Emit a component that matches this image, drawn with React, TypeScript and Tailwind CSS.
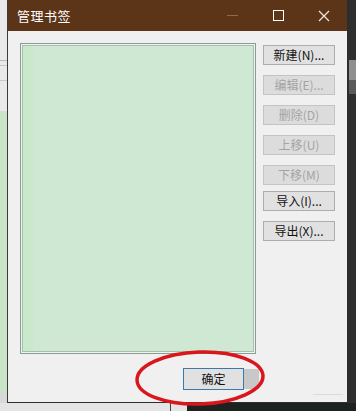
import React from 'react';

const buttons = [
  { label: '新建(N)...', enabled: true },
  { label: '编辑(E)...', enabled: false },
  { label: '删除(D)', enabled: false },
  { label: '上移(U)', enabled: false },
  { label: '下移(M)', enabled: false },
  { label: '导入(I)...', enabled: true },
  { label: '导出(X)...', enabled: true },
];

const SideButton = ({ label, enabled }: { label: string; enabled: boolean }) => (
  <div
    className={
      'w-[72px] h-[20px] flex items-center justify-center text-[12px] leading-none border ' +
      (enabled
        ? 'bg-[#e1e1e1] border-[#adadad] text-[#111]'
        : 'bg-[#dcdcdc] border-[#c4c4c4] text-[#a3a3a3]')
    }
  >
    {label}
  </div>
);

export default function App() {
  const font = { fontFamily: '"Noto Sans CJK SC", "Liberation Sans", sans-serif' };
  return (
    <div className="relative w-[356px] h-[411px] overflow-hidden flex flex-col bg-[#1f1f1f]" style={font}>
      <div className="flex h-[403px]">
        {/* app behind, left */}
        <div className="w-[7px] flex flex-col bg-[#e9e9e9]">
          <div className="h-[60px]" />
          <div className="h-px bg-[#b9b9b9]" />
          <div className="h-[4px]" />
          <div className="h-px bg-[#c9c9c9]" />
          <div className="h-[14px]" />
          <div className="h-px bg-[#c9c9c9]" />
          <div className="h-[30px]" />
          <div className="flex-1 bg-[#c9e4c7] flex flex-col justify-end">
            <div className="h-[10px] bg-[#d8d8d8]" />
          </div>
        </div>

        {/* dialog */}
        <div className="w-[342px] flex flex-col border-r-2 border-b border-[#2d2d2d] border-l border-l-[#3a3a3a]">
          <div className="h-[31px] bg-[#5c3417] flex items-center text-white">
            <span className="ml-[9px] text-[13px] tracking-[0.5px]">管理书签</span>
            <div className="flex-1" />
            <div className="w-[46px] h-full flex items-center justify-center">
              <div className="w-[11px] h-px bg-[#8a6a55]" />
            </div>
            <div className="w-[46px] h-full flex items-center justify-center">
              <div className="w-[11px] h-[11px] border border-white" />
            </div>
            <div className="w-[46px] h-full flex items-center justify-center">
              <svg width="12" height="12" viewBox="0 0 12 12">
                <path d="M1 1L11 11M11 1L1 11" stroke="#f3e9e1" strokeWidth="1.2" />
              </svg>
            </div>
          </div>

          <div className="flex-1 bg-[#f0f0f0] flex flex-col">
            <div className="flex pt-[12px] pl-[12px]">
              <div className="w-[236px] h-[311px] border border-[#8b9b96] p-px bg-[#eef5ef]">
                <div className="w-full h-full border border-[#a9bdb0] bg-[#cfe8d3] flex">
                  <div className="w-[10px] bg-[#c9eaca]" />
                </div>
              </div>
              <div className="ml-[7px] pt-[2px] flex flex-col">
                <div className="flex flex-col gap-[10px]">
                  {buttons.slice(0, 5).map((b) => (
                    <SideButton key={b.label} {...b} />
                  ))}
                </div>
                <div className="mt-[6px] flex flex-col gap-[10px]">
                  {buttons.slice(5).map((b) => (
                    <SideButton key={b.label} {...b} />
                  ))}
                </div>
              </div>
            </div>

            <div className="flex mt-[14px] pl-[175px] items-center">
              <div className="w-[61px] h-[22px] border border-[#3c78a8] bg-[#e1e1e1] flex items-center justify-center text-[12px] text-[#111]">
                确定
              </div>
              <div className="w-[15px] h-[20px] bg-[#c8c8c8]" />
            </div>
            <div className="flex-1 flex justify-end items-end pr-[4px] pb-[4px]">
              <div className="w-[30px] h-[4px] border-t border-[#dcdcdc]" />
            </div>
          </div>
        </div>

        {/* app behind, right */}
        <div className="w-[7px] flex flex-col bg-[#2e2e2e]">
          <div className="h-[60px]" />
          <div className="h-[20px] bg-[#8f8f8f]" />
          <div className="h-[14px] bg-[#5a5a5a]" />
          <div className="flex-1" />
        </div>
      </div>

      <div className="flex-1 flex">
        <div className="w-[170px] bg-[#e4e4e4]" />
        <div className="w-px bg-[#444]" />
        <div className="w-[16px] bg-[#e4e4e4]" />
        <div className="flex-1 bg-[#1d2220]" />
      </div>

      {/* red annotation ellipse */}
      <svg className="absolute left-0 top-0 pointer-events-none" width="356" height="411">
        <ellipse cx="200" cy="378" rx="63" ry="26" fill="none" stroke="#d9161c" strokeWidth="3.5" transform="rotate(-2 200 378)" />
      </svg>
    </div>
  );
}
